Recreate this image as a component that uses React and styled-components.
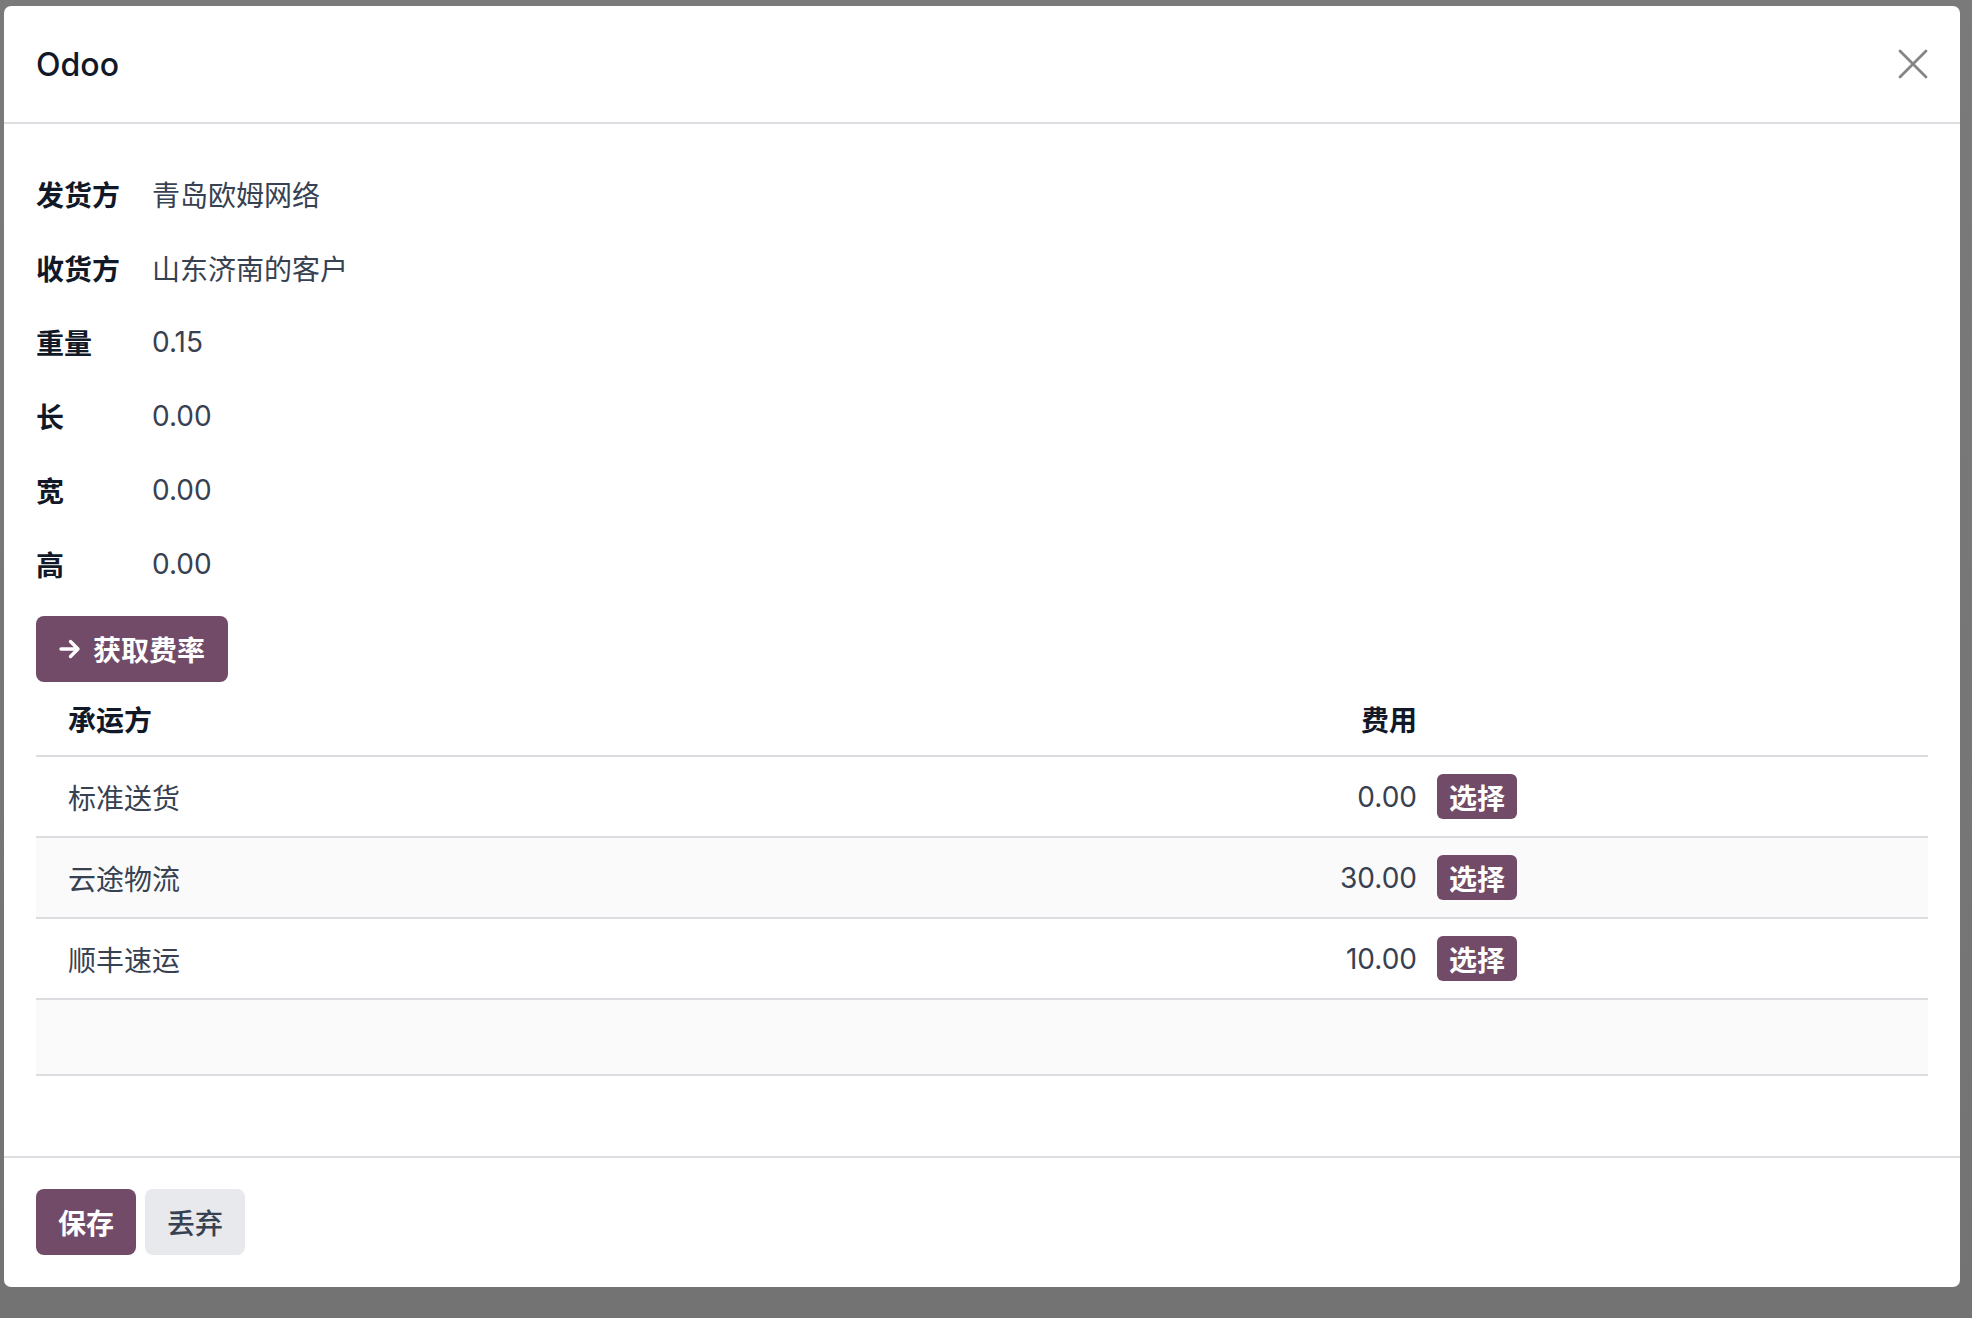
import styled, { createGlobalStyle } from "styled-components";

const GlobalStyle = createGlobalStyle`
  html, body {
    margin: 0;
    padding: 0;
  }
  body {
    font-family: Inter, "Noto Sans CJK SC", sans-serif;
    background: #777777;
  }
  * {
    box-sizing: border-box;
  }
`;

const Backdrop = styled.div`
  width: 1972px;
  height: 1318px;
  display: flex;
  padding: 6px 12px 31px 4px;
  background: linear-gradient(180deg, #7a7a7a 0%, #767676 60%, #737373 100%);
`;

const Modal = styled.div`
  flex: 1;
  display: flex;
  flex-direction: column;
  background: #ffffff;
  border-radius: 7px;
  overflow: hidden;
`;

const Header = styled.div`
  height: 118px;
  padding: 0 32px;
  display: flex;
  align-items: center;
  justify-content: space-between;
  border-bottom: 2px solid #dcdde1;
`;

const Title = styled.h4`
  margin: 0;
  font-size: 32px;
  font-weight: 500;
  color: #111827;
`;

const CloseButton = styled.button`
  border: none;
  background: none;
  padding: 0;
  width: 30px;
  height: 30px;
  display: flex;
  align-items: center;
  justify-content: center;
  cursor: pointer;
`;

const Body = styled.div`
  flex: 1;
  padding: 33px 32px 0;
`;

const FieldRow = styled.div`
  display: grid;
  grid-template-columns: 116px 1fr;
  align-items: center;
  height: 74px;
  font-size: 28px;
`;

const Label = styled.span`
  font-weight: 700;
  color: #111827;
`;

const Value = styled.span`
  color: #374151;
`;

const Button = styled.button`
  display: inline-flex;
  align-items: center;
  gap: 12px;
  height: ${(p) => (p.small ? "45px" : "66px")};
  padding: ${(p) => (p.small ? "0 12px" : "0 22px")};
  border: none;
  border-radius: ${(p) => (p.small ? "6px" : "8px")};
  font-family: inherit;
  font-size: 28px;
  font-weight: ${(p) => (p.secondary ? 500 : 700)};
  background: ${(p) => (p.secondary ? "#e7e9ed" : "#714b67")};
  color: ${(p) => (p.secondary ? "#374151" : "#ffffff")};
  cursor: pointer;
`;

const RateButton = styled(Button)`
  margin-top: 15px;
  padding: 0 23px;
`;

const Table = styled.div`
  font-size: 28px;
`;

const Row = styled.div`
  display: grid;
  grid-template-columns: minmax(0, 1fr) 180px 80px 411px;
  align-items: center;
  height: ${(p) => p.h}px;
  border-bottom: 2px solid #dcdde1;
  background: ${(p) => (p.striped ? "#fafafa" : "#ffffff")};
  color: #374151;
`;

const HeadCell = styled.div`
  font-weight: 700;
  color: #111827;
  padding-left: ${(p) => (p.right ? "0" : "32px")};
  padding-right: ${(p) => (p.right ? "20px" : "0")};
  text-align: ${(p) => (p.right ? "right" : "left")};
`;

const Cell = styled.div`
  padding-left: ${(p) => (p.right ? "0" : "32px")};
  padding-right: ${(p) => (p.right ? "20px" : "0")};
  text-align: ${(p) => (p.right ? "right" : "left")};
  white-space: nowrap;
`;

const Footer = styled.div`
  display: flex;
  gap: 9px;
  padding: 31px 32px 32px;
  border-top: 2px solid #dcdde1;
`;

const carriers = [
  { name: "标准送货", cost: "0.00" },
  { name: "云途物流", cost: "30.00" },
  { name: "顺丰速运", cost: "10.00" },
];

const fields = [
  ["发货方", "青岛欧姆网络"],
  ["收货方", "山东济南的客户"],
  ["重量", "0.15"],
  ["长", "0.00"],
  ["宽", "0.00"],
  ["高", "0.00"],
];

const App = () => {
  return (
    <>
      <GlobalStyle />
      <Backdrop>
        <Modal>
          <Header>
            <Title>Odoo</Title>
            <CloseButton aria-label="Close">
              <svg width="30" height="30" viewBox="0 0 30 30">
                <path
                  d="M2 2 L28 28 M28 2 L2 28"
                  stroke="#858585"
                  strokeWidth="2.8"
                  strokeLinecap="round"
                />
              </svg>
            </CloseButton>
          </Header>
          <Body>
            {fields.map(([label, value]) => (
              <FieldRow key={label}>
                <Label>{label}</Label>
                <Value>{value}</Value>
              </FieldRow>
            ))}
            <RateButton>
              <svg width="22" height="20" viewBox="0 0 22 20">
                <path
                  d="M2 10 H19 M11.5 2.5 L19 10 L11.5 17.5"
                  stroke="#ffffff"
                  strokeWidth="3.4"
                  fill="none"
                  strokeLinecap="round"
                  strokeLinejoin="round"
                />
              </svg>
              获取费率
            </RateButton>
            <Table>
              <Row h={75}>
                <HeadCell>承运方</HeadCell>
                <HeadCell right>费用</HeadCell>
                <div />
                <div />
              </Row>
              {carriers.map((c, i) => (
                <Row h={81} key={c.name} striped={i % 2 === 1}>
                  <Cell>{c.name}</Cell>
                  <Cell right>{c.cost}</Cell>
                  <div>
                    <Button small>选择</Button>
                  </div>
                  <div />
                </Row>
              ))}
              <Row h={76} striped />
            </Table>
          </Body>
          <Footer>
            <Button>保存</Button>
            <Button secondary>丢弃</Button>
          </Footer>
        </Modal>
      </Backdrop>
    </>
  );
};

export default App;
